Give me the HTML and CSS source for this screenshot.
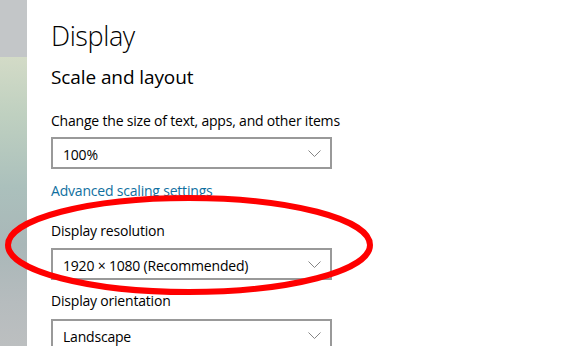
FILE: index.html
```html
<!DOCTYPE html>
<html lang="en">
<head>
  <meta charset="UTF-8" />
  <meta name="viewport" content="width=device-width, initial-scale=1" />
  <title>Display settings</title>
  <link rel="stylesheet" href="styles.css">
</head>
<body>
  <div class="window">
    <aside class="sidebar">
      <div class="sidebar-top"></div>
      <div class="sidebar-wallpaper"></div>
    </aside>

    <main class="content">
      <h1>Display</h1>
      <h2>Scale and layout</h2>

      <div class="field">
        <label>Change the size of text, apps, and other items</label>
        <div class="select">
          <span>100%</span>
          <svg class="chevron" width="13" height="7" viewBox="0 0 13 7"><path d="M0.5 0.5 L6.5 6.5 L12.5 0.5" /></svg>
        </div>
      </div>

      <a class="link" href="#">Advanced scaling settings</a>

      <div class="field field-resolution">
        <label>Display resolution</label>
        <div class="select">
          <span>1920 × 1080 (Recommended)</span>
          <svg class="chevron" width="13" height="7" viewBox="0 0 13 7"><path d="M0.5 0.5 L6.5 6.5 L12.5 0.5" /></svg>
        </div>
      </div>

      <div class="field field-orientation">
        <label>Display orientation</label>
        <div class="select">
          <span>Landscape</span>
          <svg class="chevron" width="13" height="7" viewBox="0 0 13 7"><path d="M0.5 0.5 L6.5 6.5 L12.5 0.5" /></svg>
        </div>
      </div>
    </main>

    <!-- red marker drawn over the screenshot -->
    <svg class="annotation" width="583" height="346" viewBox="0 0 583 346">
      <ellipse cx="189" cy="245" rx="181" ry="47" />
    </svg>
  </div>
</body>
</html>
```

FILE: styles.css
```css
:root {
  --text-color: #000;
  --border-color: #999;
  --link-color: #0f6fa0;
  --chevron-color: #858585;
}

body {
  margin: 0;
  font-family: 'Open Sans', 'Noto Sans', sans-serif;
  color: var(--text-color);
  background-color: white;
  overflow: hidden;
}

.window {
  position: relative;
  display: flex;
  width: 583px;
  height: 346px;
  overflow: hidden;
}

.sidebar {
  width: 27px;
  display: flex;
  flex-direction: column;
  flex-shrink: 0;
}

.sidebar-top {
  height: 57px;
  background-color: #c3c6c8;
}

.sidebar-wallpaper {
  flex: 1;
  background: linear-gradient(to bottom, #d3dbc7 0%, #bfd0c0 20%, #abc0bc 45%, #a9b7b8 65%, #b6bcbe 85%, #bcbfc0 100%);
}

.content {
  flex: 1;
  padding: 18px 0 0 24px;
}

h1 {
  margin: 0;
  font-size: 27px;
  font-weight: 300;
  line-height: 36px;
  letter-spacing: -0.4px;
}

h2 {
  margin: 9px 0 0;
  font-size: 19px;
  font-weight: 400;
  line-height: 28px;
  letter-spacing: -0.1px;
}

.field {
  margin-top: 20px;
}

.field label {
  display: block;
  font-size: 14px;
  line-height: 20px;
  letter-spacing: -0.2px;
  margin-bottom: 6px;
}

.select {
  box-sizing: border-box;
  width: 281px;
  height: 32px;
  border: 2px solid var(--border-color);
  display: flex;
  align-items: center;
  justify-content: space-between;
  padding: 0 9px 0 10px;
  font-size: 14px;
  letter-spacing: -0.2px;
}

.select span {
  padding-top: 2px;
}

.chevron path {
  fill: none;
  stroke: var(--chevron-color);
  stroke-width: 1;
}

.link {
  display: block;
  margin-top: 12px;
  font-size: 14px;
  line-height: 20px;
  letter-spacing: -0.2px;
  color: var(--link-color);
  text-decoration: none;
}

.field-resolution {
  margin-top: 20px;
}

.field-resolution label {
  margin-bottom: 7px;
}

.field-orientation {
  margin-top: 11px;
}

.field-orientation label {
  margin-bottom: 8px;
}

.annotation {
  position: absolute;
  left: 0;
  top: 0;
  pointer-events: none;
}

.annotation ellipse {
  fill: none;
  stroke: #ff0000;
  stroke-width: 6;
}
```
